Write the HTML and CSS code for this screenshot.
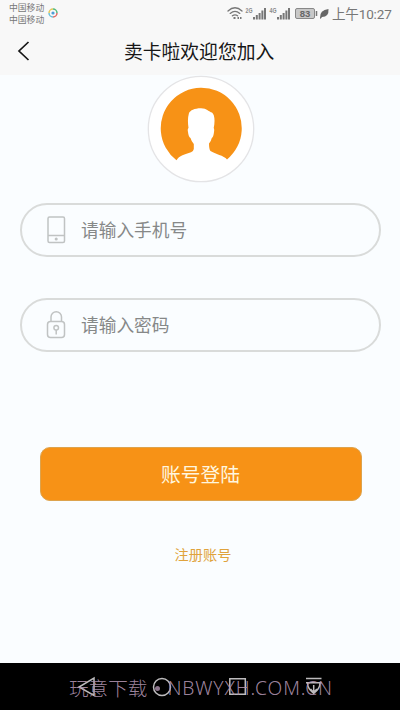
FILE: index.html
```html
<!DOCTYPE html>
<html lang="zh-CN">
<head>
<meta charset="utf-8">
<title>卖卡啦欢迎您加入</title>
<link rel="stylesheet" href="styles.css">
</head>
<body>
<div class="screen">
  <header class="top">
    <div class="status">
      <div class="carriers"><span>中国移动</span><span>中国移动</span></div>
      <svg class="app-dot" width="10" height="10" viewBox="0 0 10 10" fill="none" stroke-width="1.5">
        <path d="M1 5A4 4 0 0 1 5 1" stroke="#e3c95c"/><path d="M5 1A4 4 0 0 1 9 5" stroke="#55b97c"/><path d="M9 5A4 4 0 0 1 5 9" stroke="#e06a66"/><path d="M5 9A4 4 0 0 1 1 5" stroke="#69bfd8"/><circle cx="5" cy="5" r="1.600" fill="#4d9ed8"/>
      </svg>
      <svg class="signals" width="102" height="16" viewBox="0 0 102 16">
        <g fill="none" stroke="#777" stroke-width="1.3" stroke-linecap="round">
          <path d="M1 6Q8 -.5 15 6M3.2 8.4Q8 4.3 12.8 8.4M5.4 10.8Q8 8.8 10.6 10.8"/>
        </g>
        <path d="M6.5 12h2v2h-2zM10.5 12h1.5v2h-1.5zM13 12h1.5v2H13z" fill="#777"/>
        <g fill="#777">
          <path d="M26 12h2v2.500h-2zM28.800 10h2v4.500h-2zM31.600 8h2v6.500h-2zM34.400 5.500h2v9h-2zM37 3h2v11.500h-2z"/>
          <path d="M50 12h2v2.500h-2zM52.800 10h2v4.500h-2zM55.600 8h2v6.500h-2zM58.400 5.500h2v9h-2zM61 3h2v11.500h-2z"/>
        </g>
        <text class="net" x="18.500" y="7.500" textLength="7" lengthAdjust="spacingAndGlyphs">2G</text><text class="net" x="42.500" y="7.500" textLength="7" lengthAdjust="spacingAndGlyphs">4G</text>
        <rect x="68.500" y="3.500" width="19" height="10" rx="1.500" fill="#c8c8c8" stroke="#888"/>
        <path d="M89.500 6v5" stroke="#777" stroke-width="1.500"/>
        <text class="level" x="78" y="12.300">83</text>
        <path d="M93 13Q92.500 5 101.500 4Q102 12 95 12L93.500 14Z" fill="#666"/>
      </svg>
      <span class="clock">上午10:27</span>
    </div>
    <div class="title-bar">
      <svg class="back" width="14" height="22" viewBox="0 0 14 22"><path d="M11.500 2L2 11l9.500 9" fill="none" stroke="#161616" stroke-width="1.700"/></svg>
      <h1>卖卡啦欢迎您加入</h1>
    </div>
  </header>
  <main>
    <svg class="avatar" width="108" height="108" viewBox="0 0 108 108">
      <circle cx="54" cy="54" r="52.700" fill="#fff" stroke="#e4e4e6" stroke-width="1.300"/>
      <path d="M29.500 85.300A40.500 40.500 0 1 1 80 84.500C77 80.500 68 79 63.500 76Q62 74.500 62 68.500Q64 66.500 64.800 63Q66.500 62 67 57Q67.500 54 66.700 53C68 47 68 40 65 37.500C62 37 60 33.300 54 33.300C47 33.300 43.500 35.500 42 38C40.500 43 40.800 48 41.500 53Q40.300 54 41 57Q41.500 62 43.500 63Q44.500 66.500 46.800 69V74Q46.500 76.300 44 77.200C38 79.300 32 80.300 29.500 85.300Z" fill="#f79216"/>
    </svg>
    <div class="field phone">
      <svg width="20" height="28" viewBox="0 0 20 28" fill="none" stroke="#c0c3c3" stroke-width="1.500"><rect x="2" y="1" width="16.500" height="25.500" rx="1.500"/><path d="M2 19.500h16.500"/><circle cx="10.200" cy="23" r=".8" fill="#bcbfc0"/></svg>
      <span>请输入手机号</span>
    </div>
    <div class="field password">
      <svg width="20" height="28" viewBox="0 0 20 28" fill="none" stroke="#c0c3c3" stroke-width="1.500"><rect x="1.500" y="10.500" width="17" height="16" rx="3"/><path d="M5 10.500V6a5 5 0 0 1 10.500 0v4.500M10.200 19v4.500"/><circle cx="10.200" cy="16.700" r="2.300"/></svg>
      <span>请输入密码</span>
    </div>
    <div class="login">账号登陆</div>
    <div class="register">注册账号</div>
  </main>
  <footer class="nav">
    <svg width="400" height="47" viewBox="0 0 400 47" fill="none" stroke="#bdbbbd" stroke-width="1.500">
      <path d="M94 15v17.500L79 24ZM229.800 15.800h15.500v15.500h-15.500zM306 15.500h15.500M306 19.800h15.500M307.500 20C307.500 25 310 27.500 313.700 30.500C317.500 27.500 320 25 320 20M313.700 22v7M310.500 26l3.200 3.500l3.200-3.500"/><circle cx="162" cy="24" r="8.500"/>
    </svg>
    <div class="watermark"><span class="site">玩意下载</span><i></i><span class="domain">NBWYXH.COM.CN</span></div>
  </footer>
</div>
</body>
</html>
```
FILE: styles.css
```css
* { box-sizing: border-box; }
body { margin: 0; font-family: "Noto Sans CJK SC", sans-serif; }
.screen { width: 400px; height: 710px; display: flex; flex-direction: column; background: #fafdff; overflow: hidden; }
.top { height: 75px; background: #f8f8f8; }
.status { height: 28px; display: flex; color: #777; }
.carriers { width: 38px; margin-left: 9px; padding-top: 2px; display: flex; flex-direction: column; font-size: 8.8px; line-height: 12px; white-space: nowrap; }
.app-dot { margin: 8px 0 0 1px; }
.signals { margin: 5px 0 0 169px; }
.net { font: bold 7.5px "Liberation Sans", sans-serif; fill: #888; }
.level { font: bold 9.5px "Liberation Sans", sans-serif; fill: #666; text-anchor: middle; }
.clock { margin-left: 3px; font: 13.5px/28px Roboto, "Noto Sans CJK SC", sans-serif; letter-spacing: -.15px; white-space: nowrap; }
.title-bar { height: 47px; display: flex; align-items: center; padding-left: 17px; }
.back { margin-top: -1px; }
h1 { margin: -2px 0 0 93px; font-size: 18.8px; font-weight: 400; line-height: 28px; color: #161616; white-space: nowrap; }
main { height: 588px; display: flex; flex-direction: column; align-items: center; }
.avatar { flex: none; margin: 0 0 0 2px; }
.field { width: 361px; height: 54px; flex: none; display: flex; align-items: center; padding-left: 24px; margin-left: 1px; border: 2px solid #d9dbda; border-radius: 27px; color: #868888; font-size: 17.7px; line-height: 26px; }
.field span { margin: -2px 0 0 15px; }
.phone { margin-top: 20px; }
.password { margin-top: 41px; }
.login { width: 322px; height: 54px; flex: none; margin: 95px 0 0 1px; border: 1px solid #dda34d; border-radius: 10px; background: #f79216; color: #fff6df; font-size: 19.8px; line-height: 51px; text-align: center; }
.register { margin: 43px 0 0 6px; color: #e0a33c; font-size: 14.2px; line-height: 20px; }
.nav { position: relative; height: 47px; flex: none; background: #000; }
.nav svg { display: block; }
.watermark { position: absolute; inset: 0; display: flex; align-items: center; padding: 3px 0 0 69px; color: rgba(176, 148, 176, .9); font-size: 19.6px; font-weight: 300; line-height: 28px; white-space: nowrap; }
.watermark i { width: 5px; height: 5px; margin: 0 7px 0 8px; border-radius: 50%; background: #8c748c; }
.domain { font-family: "Noto Sans", sans-serif; font-size: 19.2px; letter-spacing: .85px; }
```
